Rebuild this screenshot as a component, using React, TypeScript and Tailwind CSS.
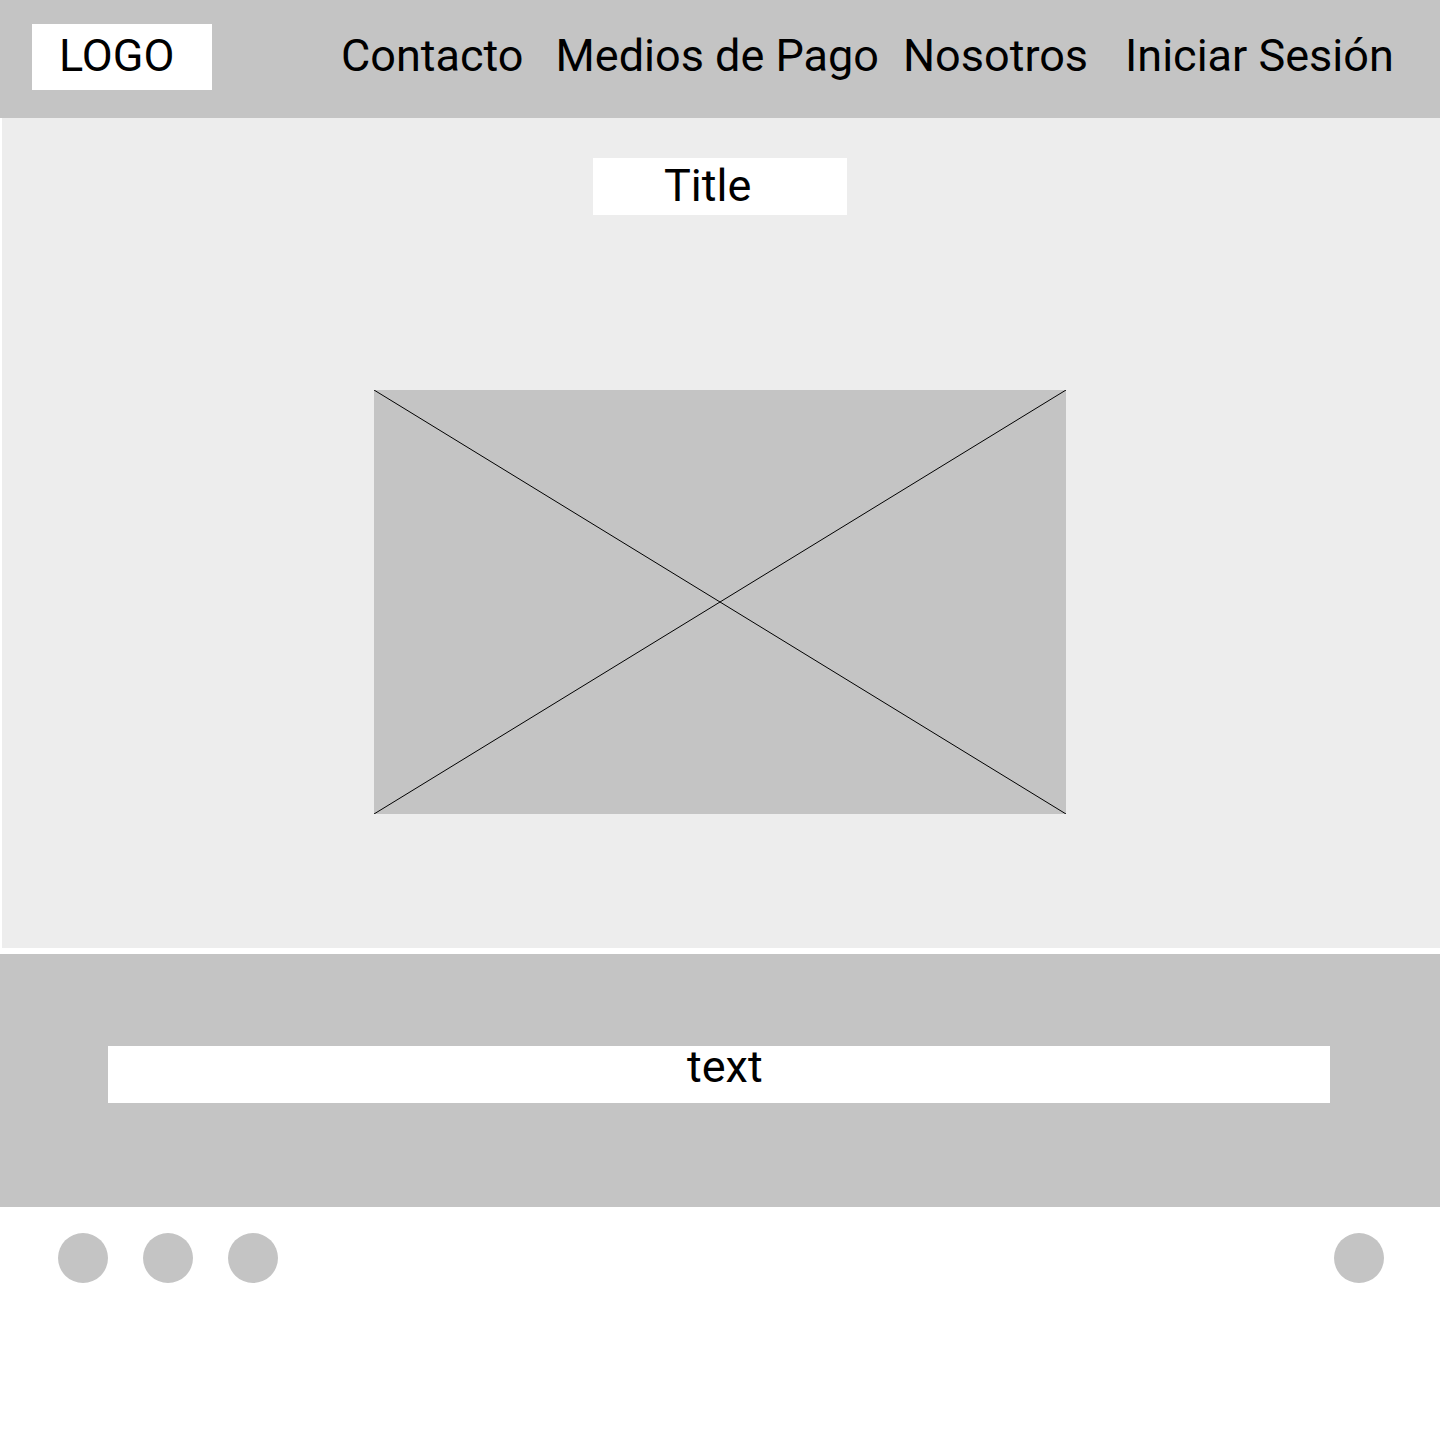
const navItems = [
  { label: "Contacto", ml: "ml-[129px]" },
  { label: "Medios de Pago", ml: "ml-[32px]" },
  { label: "Nosotros", ml: "ml-[24px]" },
  { label: "Iniciar Sesión", ml: "ml-[37px]" },
];

function ImagePlaceholder() {
  return (
    <div className="relative ml-[372px] mt-[175px] h-[424px] w-[692px] bg-[#c4c4c4]">
      <svg
        className="absolute inset-0 h-full w-full"
        viewBox="0 0 692 424"
        preserveAspectRatio="none"
      >
        <line x1="0" y1="0" x2="692" y2="424" stroke="#000" strokeWidth="1" />
        <line x1="692" y1="0" x2="0" y2="424" stroke="#000" strokeWidth="1" />
      </svg>
    </div>
  );
}

export default function App() {
  return (
    <div
      className="h-[1452px] w-[1440px] bg-white text-[45px] text-black"
      style={{ fontFamily: "Roboto, 'Liberation Sans', sans-serif" }}
    >
      {/* header */}
      <header className="flex h-[118px] items-start bg-[#c4c4c4] pl-[32px] pt-[24px]">
        <div className="h-[66px] w-[180px] bg-white pl-[27px] leading-[64px]">LOGO</div>
        {navItems.map((item) => (
          <a key={item.label} className={`${item.ml} whitespace-nowrap leading-[64px]`}>
            {item.label}
          </a>
        ))}
      </header>

      {/* main */}
      <main className="ml-[2px] flex h-[830px] flex-col bg-[#ededed] pt-[40px]">
        <div className="ml-[591px] h-[57px] w-[254px] bg-white pl-[71px] leading-[55px]">Title</div>
        <ImagePlaceholder />
      </main>

      {/* text band */}
      <section className="mt-[6px] h-[253px] bg-[#c4c4c4] pt-[92px]">
        <div className="ml-[108px] h-[57px] w-[1222px] bg-white pl-[579px] leading-[41px]">text</div>
      </section>

      {/* social */}
      <div className="flex items-center pl-[58px] pr-[56px] pt-[26px]">
        <div className="flex gap-[35px]">
          <span className="h-[50px] w-[50px] rounded-full bg-[#c4c4c4]" />
          <span className="h-[50px] w-[50px] rounded-full bg-[#c4c4c4]" />
          <span className="h-[50px] w-[50px] rounded-full bg-[#c4c4c4]" />
        </div>
        <span className="ml-auto h-[50px] w-[50px] rounded-full bg-[#c4c4c4]" />
      </div>
    </div>
  );
}
